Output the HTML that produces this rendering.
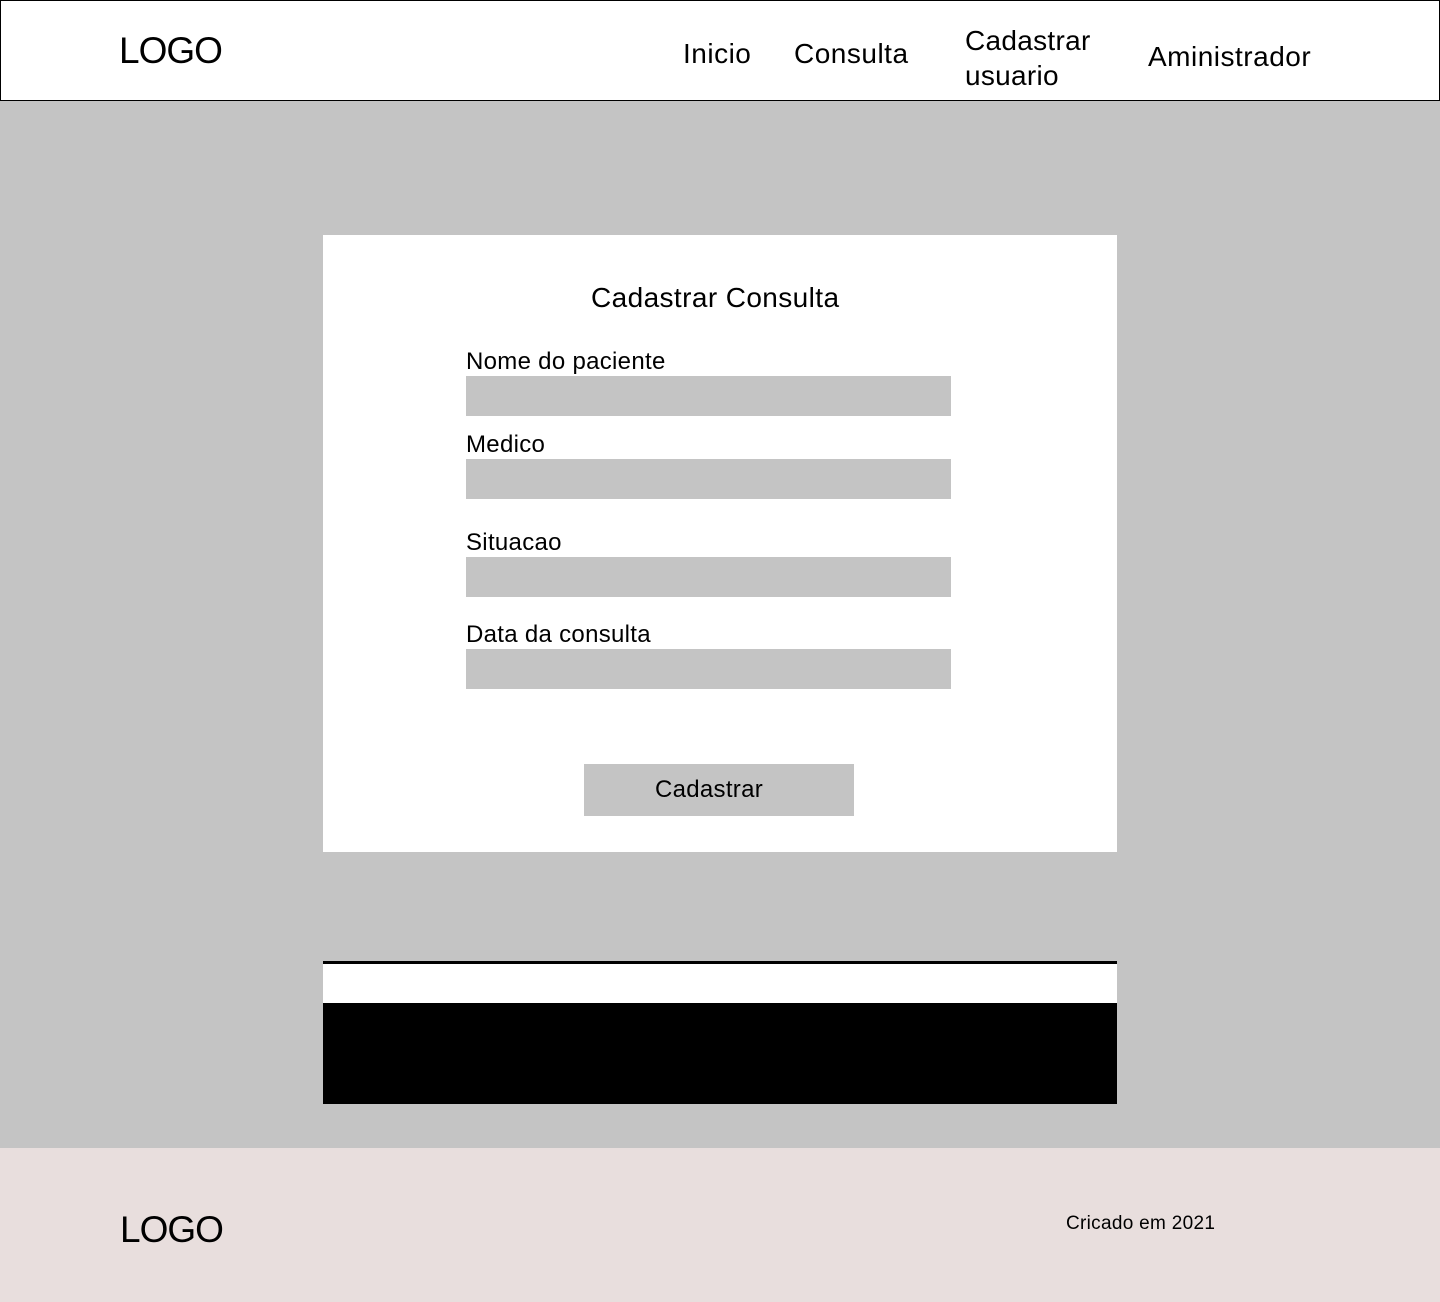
<!DOCTYPE html>
<html><head><meta charset="utf-8"><style>
*{margin:0;padding:0;box-sizing:border-box}
body{width:1440px;height:1302px;background:#c4c4c4;font-family:"Liberation Sans",sans-serif;position:relative;overflow:hidden;color:#000}
.a{position:absolute;white-space:nowrap;line-height:1}
header{position:absolute;left:0;top:0;width:1440px;height:101px;background:#fff;border:1px solid #000}
.card{position:absolute;left:323px;top:235px;width:794px;height:617px;background:#fff}
.in{position:absolute;left:466px;width:485px;height:40px;background:#c4c4c4}
.lbl{font-size:24px}
footer{position:absolute;left:0;top:1148px;width:1440px;height:154px;background:#e8dedd}
</style></head><body>
<header></header>
<div class="a" style="left:119px;top:32px;font-size:37px;letter-spacing:-1px">LOGO</div>
<div class="a" style="left:683px;top:40px;font-size:28px;letter-spacing:0.5px">Inicio</div>
<div class="a" style="left:794px;top:40px;font-size:28px;letter-spacing:0.5px">Consulta</div>
<div class="a" style="left:965px;top:23px;font-size:28px;line-height:35px;letter-spacing:0.3px">Cadastrar<br>usuario</div>
<div class="a" style="left:1148px;top:43px;font-size:28px;letter-spacing:0.5px">Aministrador</div>
<div class="card"></div>
<div class="a" style="left:591px;top:284px;font-size:28px;letter-spacing:0.4px">Cadastrar Consulta</div>
<div class="a lbl" style="left:466px;top:350px;letter-spacing:0.3px">Nome do paciente</div>
<div class="in" style="top:376px"></div>
<div class="a lbl" style="left:466px;top:433px;letter-spacing:0.3px">Medico</div>
<div class="in" style="top:459px"></div>
<div class="a lbl" style="left:466px;top:531px;letter-spacing:0.3px">Situacao</div>
<div class="in" style="top:557px"></div>
<div class="a lbl" style="left:466px;top:623px;letter-spacing:0.3px">Data da consulta</div>
<div class="in" style="top:649px"></div>
<div style="position:absolute;left:584px;top:764px;width:270px;height:52px;background:#c4c4c4"></div>
<div class="a" style="left:574px;width:270px;text-align:center;top:778px;font-size:24px;letter-spacing:0.3px">Cadastrar</div>
<div style="position:absolute;left:323px;top:961px;width:794px;height:3px;background:#000"></div>
<div style="position:absolute;left:323px;top:964px;width:794px;height:39px;background:#fff"></div>
<div style="position:absolute;left:323px;top:1003px;width:794px;height:101px;background:#000"></div>
<footer></footer>
<div class="a" style="left:120px;top:1211px;font-size:37px;letter-spacing:-1px">LOGO</div>
<div class="a" style="left:1066px;top:1214px;font-size:19px;letter-spacing:0.3px">Cricado em 2021</div>
</body></html>
